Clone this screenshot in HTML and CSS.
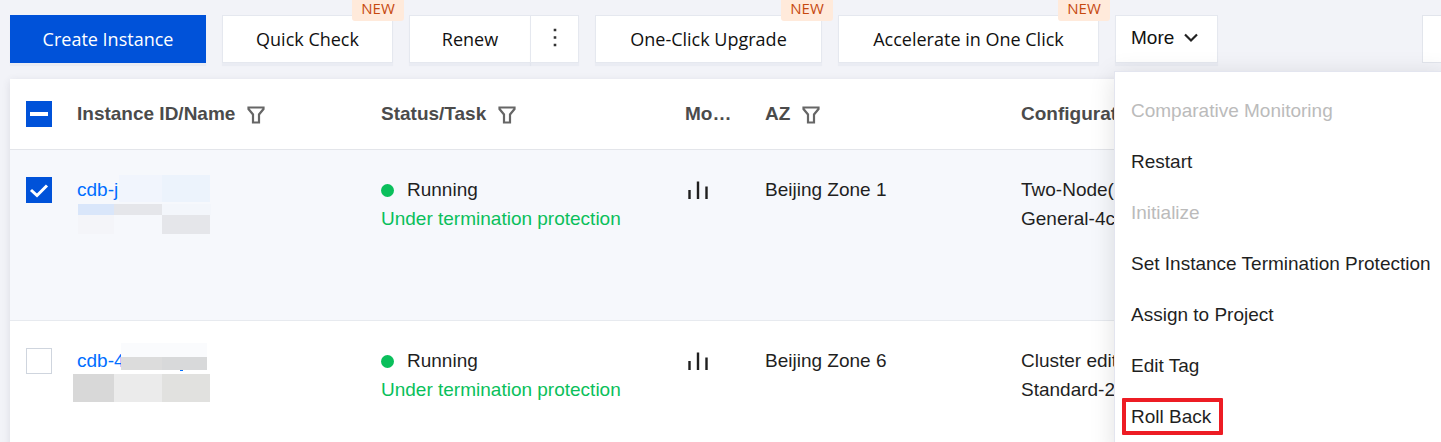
FILE: index.html
```html
<!DOCTYPE html>
<html lang="en">
<head>
    <meta charset="UTF-8">
    <meta name="viewport" content="width=device-width, initial-scale=1.0">
    <title>Instance List</title>
    <link rel="stylesheet" href="styles.css">
</head>
<body>
    <!-- shared icons -->
    <svg class="icon-defs" aria-hidden="true">
        <symbol id="filter" viewBox="0 0 18 18">
            <path d="M1.500 1.500h15v1.500l-4.500 5.500v8h-6v-8L1.500 3z" fill="none" stroke="#666" stroke-width="2.200"/>
        </symbol>
        <symbol id="bars" viewBox="0 0 22 18">
            <path d="M2.500 9V18M11 .5v17.500M19.500 5.500v12.500" fill="none" stroke="#1f1f1f" stroke-width="2.400"/>
        </symbol>
    </svg>

    <div class="toolbar">
        <button type="button" class="btn primary create">Create Instance</button>
        <button type="button" class="btn quick">Quick Check<span class="badge">NEW</span></button>
        <div class="btn-group">
            <button type="button" class="btn renew">Renew</button>
            <button type="button" class="btn dots" aria-label="More renew options">
                <svg width="4" height="20" viewBox="0 0 4 20"><path d="M.7 1.700h2.600v2.600H.7zM.7 9.200h2.600v2.600H.7zM.7 16.700h2.600v2.600H.7z" fill="#333"/></svg>
            </button>
        </div>
        <button type="button" class="btn upgrade">One-Click Upgrade<span class="badge">NEW</span></button>
        <button type="button" class="btn accelerate">Accelerate in One Click<span class="badge">NEW</span></button>
        <div class="dropdown">
            <button type="button" class="btn more-btn">More
                <svg width="14" height="10" viewBox="0 0 14 10"><path d="M1 1.500l6 6 6-6" fill="none" stroke="#222" stroke-width="2.200"/></svg>
            </button>
            <div class="menu">
                <button type="button" disabled>Comparative Monitoring</button>
                <button type="button">Restart</button>
                <button type="button" disabled>Initialize</button>
                <button type="button">Set Instance Termination Protection</button>
                <button type="button">Assign to Project</button>
                <button type="button">Edit Tag</button>
                <button type="button"><span class="highlight">Roll Back</span></button>
            </div>
        </div>
        <input type="text" class="search" aria-label="Search">
    </div>

    <div class="panel">
        <table>
            <colgroup>
                <col class="col-check">
                <col class="col-name">
                <col class="col-status">
                <col class="col-monitor">
                <col class="col-az">
                <col>
            </colgroup>
            <thead>
                <tr>
                    <th><input type="checkbox" class="partial" aria-label="Select all"></th>
                    <th>Instance ID/Name <svg class="filter"><use href="#filter"/></svg></th>
                    <th>Status/Task <svg class="filter"><use href="#filter"/></svg></th>
                    <th>Monitoring</th>
                    <th>AZ <svg class="filter"><use href="#filter"/></svg></th>
                    <th>Configuration</th>
                </tr>
            </thead>
            <tbody>
                <tr class="selected">
                    <td><input type="checkbox" checked aria-label="Select instance"></td>
                    <td class="name">
                        <a href="#">cdb-j</a>
                        <svg class="mask" width="138" height="60" viewBox="0 0 138 60" shape-rendering="crispEdges">
                            <path d="M46 0h43v27H46z" fill="#f1f5fd"/>
                            <path d="M89 0h48v27H89z" fill="#ecf3fc"/>
                            <path d="M5 29h36v11H5z" fill="#d9e6fa"/>
                            <path d="M41 29h48v11H41z" fill="#e5e6ea"/>
                            <path d="M89 29h49v11H89z" fill="#f3f6fb"/>
                            <path d="M5 40h36v19H5z" fill="#f4f5f9"/>
                            <path d="M89 40h48v19H89z" fill="#e5e6ea"/>
                        </svg>
                    </td>
                    <td>
                        <span class="dot"></span>Running<br>
                        <span class="protected">Under termination protection</span>
                    </td>
                    <td><svg class="bars"><use href="#bars"/></svg></td>
                    <td>Beijing Zone 1</td>
                    <td>Two-Node(<br>General-4c</td>
                </tr>
                <tr>
                    <td><input type="checkbox" aria-label="Select instance"></td>
                    <td class="name">
                        <a href="#">cdb-4</a>
                        <svg class="mask" width="138" height="60" viewBox="0 0 138 60" shape-rendering="crispEdges">
                            <path d="M48 -3h86v14H48z" fill="#fafbfd"/>
                            <path d="M48 11h41v13H48z" fill="#dcdcdc"/>
                            <path d="M89 11h45v13H89z" fill="#d8d9da"/>
                            <path d="M107 24h3v1h-3z" fill="#006eff"/>
                            <path d="M0 28h41v28H0z" fill="#d8d8d8"/>
                            <path d="M41 28h48v28H41z" fill="#ebebeb"/>
                            <path d="M89 28h48v28H89z" fill="#e1e1df"/>
                        </svg>
                    </td>
                    <td>
                        <span class="dot"></span>Running<br>
                        <span class="protected">Under termination protection</span>
                    </td>
                    <td><svg class="bars"><use href="#bars"/></svg></td>
                    <td>Beijing Zone 6</td>
                    <td>Cluster edit<br>Standard-2</td>
                </tr>
            </tbody>
        </table>
    </div>
</body>
</html>
```
FILE: styles.css
```css
* {
    box-sizing: border-box;
}
body {
    margin: 0;
    height: 100vh;
    overflow: hidden;
    display: flex;
    flex-direction: column;
    background: #f2f3f8;
    color: #1f1f1f;
    font-family: "Liberation Sans", Arial, sans-serif;
    font-size: 19px;
}
.icon-defs {
    display: none;
}

/* Toolbar */
.toolbar {
    display: flex;
    gap: 16px;
    padding: 15px 0 16px 10px;
}
.btn {
    position: relative;
    flex: none;
    height: 48px;
    padding: 0;
    border: 1px solid #e5e8ef;
    background: white;
    color: #111;
    font-family: "Open Sans", "Segoe UI", sans-serif;
    font-size: 18px;
    white-space: nowrap;
    cursor: pointer;
    box-shadow: 0 3px 1px rgba(54, 88, 140, 0.04);
}
.primary {
    background: #0052d9;
    border-color: #0052d9;
    color: white;
}
.create {
    width: 196px;
}
.quick {
    width: 171px;
}
.renew {
    width: 122px;
}
.dots {
    width: 49px;
    margin-left: -1px;
}
.upgrade {
    width: 227px;
}
.accelerate {
    width: 261px;
}
.btn-group {
    display: flex;
}
.badge {
    position: absolute;
    right: -12px;
    bottom: 41px;
    width: 52px;
    border-radius: 3px;
    background: #ffeadb;
    color: #c6490f;
    font-size: 15px;
    line-height: 25px;
    text-align: center;
}
.more-btn {
    display: flex;
    align-items: center;
    gap: 10px;
    padding: 0 18px 3px 15px;
    width: 103px;
    font-family: inherit;
    font-size: 19px;
}
.search {
    width: 240px;
    height: 48px;
    margin-left: auto;
    margin-right: -221px;
    border: 1px solid #e2e5ec;
    background: white;
}

/* More menu */
.dropdown {
    position: relative;
}
.menu {
    position: absolute;
    z-index: 2;
    top: 56px;
    left: -1px;
    padding: 13px 0;
    border: 1px solid #e3e5ef;
    background: white;
    box-shadow: 0 4px 24px rgba(0, 0, 0, 0.12);
}
.menu button {
    display: block;
    width: 100%;
    height: 51px;
    padding: 0 16px;
    border: none;
    background: none;
    color: #1f1f1f;
    font-family: inherit;
    font-size: 19px;
    text-align: left;
    white-space: nowrap;
    cursor: pointer;
}
.menu button:disabled {
    color: #bbb;
    cursor: default;
}
.highlight {
    position: relative;
}
.highlight::after {
    content: "";
    position: absolute;
    inset: -8px -12px -8px -9px;
    border: 4px solid #ed1c24;
    border-radius: 1px;
}

/* Instance table */
.panel {
    flex: 1;
    margin-left: 10px;
    background: white;
    box-shadow: 0 2px 8px rgba(54, 58, 80, 0.12);
}
table {
    width: 100%;
    table-layout: fixed;
    border-collapse: collapse;
}
.col-check {
    width: 51px;
}
.col-name, .col-status {
    width: 304px;
}
.col-monitor {
    width: 80px;
}
.col-az {
    width: 256px;
}
th {
    height: 70px;
    padding: 0 16px;
    border-bottom: 1px solid #e3e5ea;
    color: #4b4b4b;
    text-align: left;
    white-space: nowrap;
    overflow: hidden;
    text-overflow: ellipsis;
}
td {
    height: 171px;
    padding: 25px 16px 0;
    border-bottom: 1px solid #e7eaef;
    line-height: 29px;
    vertical-align: top;
}
th:first-child, td:first-child {
    padding-right: 0;
}
.selected {
    background: #f6f8fc;
}
.filter {
    width: 18px;
    height: 18px;
    margin-left: 6px;
    vertical-align: -4px;
}
.bars {
    width: 22px;
    height: 18px;
    margin-left: 2px;
    vertical-align: -3px;
}
.name {
    position: relative;
}
.name a {
    color: #006eff;
    text-decoration: none;
}
.mask {
    position: absolute;
    top: 25px;
    left: 12px;
    overflow: visible;
}
.dot {
    display: inline-block;
    width: 13px;
    height: 13px;
    margin-right: 13px;
    border-radius: 50%;
    background: #0abf5b;
    vertical-align: -1px;
}
.protected {
    color: #0abf5b;
}
input[type="checkbox"] {
    appearance: none;
    display: block;
    width: 26px;
    height: 26px;
    margin: 0;
    border: 1px solid #cfd5de;
    background: white;
}
td input[type="checkbox"] {
    margin-top: 2px;
}
input[type="checkbox"]:checked {
    border-color: #0052d9;
    background: #0052d9 url("data:image/svg+xml,%3Csvg xmlns='http://www.w3.org/2000/svg' viewBox='0 0 24 24'%3E%3Cpath d='M4 12l6 5.500L20 7.500' fill='none' stroke='white' stroke-width='3'/%3E%3C/svg%3E");
}
input[type="checkbox"].partial {
    border-color: #0052d9;
    background: linear-gradient(white, white) center / 18px 4px no-repeat #0052d9;
}
```
